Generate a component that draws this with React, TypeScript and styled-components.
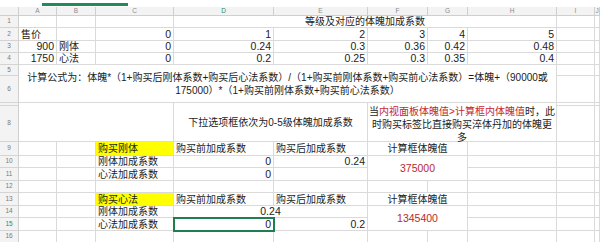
import React from 'react';
import styled, { createGlobalStyle, css } from 'styled-components';

const GlobalStyle = createGlobalStyle`
  html, body { margin: 0; padding: 0; background: #fff; overflow: hidden; }
  body { font-family: "Liberation Sans", "Noto Sans CJK SC", sans-serif; color: #1c1c1c; }
`;

const COLS = ['A', 'B', 'C', 'D', 'E', 'F', 'G', 'H', 'I', 'J'];
const COL_W = [19, 38, 39, 78, 100, 94, 60, 40, 89, 38, 5];
const ROW_H = [9, 12, 13, 12, 12, 11, 27, 3, 36, 14, 12, 13, 12, 13, 12, 13, 12];
const ROWS = 16;

type Align = 'left' | 'right' | 'center';
type CellDef = {
  col: string;
  row: number;
  cs?: number;
  rs?: number;
  text?: React.ReactNode;
  align?: Align;
  bg?: string;
  color?: string;
  selected?: boolean;
  num?: boolean;
  padTop?: number;
};

const Sheet = styled.div`
  width: 600px;
  height: 242px;
  overflow: hidden;
  background: #fff;
`;

const TabStrip = styled.div`
  height: 7px;
  display: flex;
  align-items: flex-start;
  padding-left: 42px;
  box-sizing: border-box;
`;

const ActiveTab = styled.div`
  margin-top: 3px;
  width: 86px;
  height: 3px;
  background: #1f8c5a;
`;

const Grid = styled.div`
  display: grid;
  grid-template-columns: ${COL_W.map((w) => `${w}px`).join(' ')};
  grid-template-rows: ${ROW_H.map((h) => `${h}px`).join(' ')};
`;

const Corner = styled.div`
  grid-column: 1;
  grid-row: 1;
  background: #f3f3f3;
  border-right: 1px solid #cfcfcf;
  border-bottom: 1px solid #cfcfcf;
  box-sizing: border-box;
`;

const ColHeader = styled.div<{ $c: number; $active?: boolean }>`
  grid-column: ${(p) => p.$c};
  grid-row: 1;
  background: #f3f3f3;
  border-right: 1px solid #cfcfcf;
  border-bottom: 1px solid #cfcfcf;
  box-sizing: border-box;
  display: flex;
  align-items: center;
  justify-content: center;
  font-size: 6.5px;
  line-height: 1;
  color: ${(p) => (p.$active ? '#2a8a5c' : '#8c8c8c')};
  overflow: hidden;
`;

const RowHeader = styled.div<{ $r: number; $active?: boolean }>`
  grid-column: 1;
  grid-row: ${(p) => p.$r};
  background: #f3f3f3;
  border-right: 1px solid #cfcfcf;
  border-bottom: 1px solid #d4d4d4;
  box-sizing: border-box;
  display: flex;
  align-items: center;
  justify-content: center;
  font-size: 6.5px;
  line-height: 1;
  color: ${(p) => (p.$active ? '#2a8a5c' : '#7a7a7a')};
  overflow: hidden;
`;

const Cell = styled.div<{
  $c: number;
  $r: number;
  $cs: number;
  $rs: number;
  $align: Align;
  $bg?: string;
  $color?: string;
  $selected?: boolean;
  $num?: boolean;
  $padTop?: number;
}>`
  grid-column: ${(p) => `${p.$c} / span ${p.$cs}`};
  grid-row: ${(p) => `${p.$r} / span ${p.$rs}`};
  box-sizing: border-box;
  border-right: 1px solid #dadada;
  border-bottom: 1px solid #dadada;
  background: ${(p) => p.$bg || '#fff'};
  color: ${(p) => p.$color || '#1c1c1c'};
  display: flex;
  align-items: center;
  justify-content: ${(p) =>
    p.$align === 'right' ? 'flex-end' : p.$align === 'center' ? 'center' : 'flex-start'};
  text-align: ${(p) => p.$align};
  padding: ${(p) => `${p.$padTop || 0}px 2px 0`};
  font-size: ${(p) => (p.$num ? '10.5px' : '10px')};
  line-height: 13px;
  white-space: nowrap;
  min-width: 0;
  ${(p) =>
    p.$selected &&
    css`
      position: relative;
      z-index: 1;
      outline: 2px solid #1f7d4f;
      outline-offset: -1px;
    `}
`;

const Red = styled.span`
  color: #c4262e;
`;

const cells: CellDef[] = [
  { col: 'D', row: 1, cs: 5, text: '等级及对应的体魄加成系数', align: 'center' },

  { col: 'A', row: 2, text: '售价' },
  { col: 'C', row: 2, text: '0', num: true },
  { col: 'D', row: 2, text: '1', num: true },
  { col: 'E', row: 2, text: '2', num: true },
  { col: 'F', row: 2, text: '3', num: true },
  { col: 'G', row: 2, text: '4', num: true },
  { col: 'H', row: 2, text: '5', num: true },

  { col: 'A', row: 3, text: '900', num: true },
  { col: 'B', row: 3, text: '刚体' },
  { col: 'C', row: 3, text: '0', num: true },
  { col: 'D', row: 3, text: '0.24', num: true },
  { col: 'E', row: 3, text: '0.3', num: true },
  { col: 'F', row: 3, text: '0.36', num: true },
  { col: 'G', row: 3, text: '0.42', num: true },
  { col: 'H', row: 3, text: '0.48', num: true },

  { col: 'A', row: 4, text: '1750', num: true },
  { col: 'B', row: 4, text: '心法' },
  { col: 'C', row: 4, text: '0', num: true },
  { col: 'D', row: 4, text: '0.2', num: true },
  { col: 'E', row: 4, text: '0.25', num: true },
  { col: 'F', row: 4, text: '0.3', num: true },
  { col: 'G', row: 4, text: '0.35', num: true },
  { col: 'H', row: 4, text: '0.4', num: true },

  {
    col: 'A',
    row: 5,
    cs: 8,
    rs: 2,
    align: 'center',
    text: (
      <span>
        计算公式为：体魄*（1+购买后刚体系数+购买后心法系数）/（1+购买前刚体系数+购买前心法系数）=体魄+（90000或
        <br />
        175000）*（1+购买前刚体系数+购买前心法系数）
      </span>
    ),
  },

  { col: 'A', row: 7, cs: 3, rs: 2 },
  { col: 'D', row: 7, cs: 2, rs: 2, align: 'center', text: '下拉选项框依次为0-5级体魄加成系数' },
  {
    col: 'F',
    row: 7,
    cs: 3,
    rs: 2,
    align: 'center',
    padTop: 4,
    text: (
      <span>
        当<Red>内视面板体魄值&gt;计算框内体魄值</Red>时，此
        <br />
        时购买标签比直接购买淬体丹加的体魄更
        <br />多
      </span>
    ),
  },

  { col: 'C', row: 9, text: '购买刚体', bg: '#ffff00' },
  { col: 'D', row: 9, text: '购买前加成系数' },
  { col: 'E', row: 9, text: '购买后加成系数' },
  { col: 'F', row: 9, cs: 2, text: '计算框体魄值', align: 'center' },

  { col: 'C', row: 10, text: '刚体加成系数' },
  { col: 'D', row: 10, text: '0', num: true },
  { col: 'E', row: 10, text: '0.24', num: true },
  { col: 'F', row: 10, cs: 2, rs: 2, text: '375000', align: 'center', color: '#b8282f', num: true },

  { col: 'C', row: 11, text: '心法加成系数' },
  { col: 'D', row: 11, text: '0', num: true },

  { col: 'C', row: 13, text: '购买心法', bg: '#ffff00' },
  { col: 'D', row: 13, text: '购买前加成系数' },
  { col: 'E', row: 13, text: '购买后加成系数' },
  { col: 'F', row: 13, cs: 2, text: '计算框体魄值', align: 'center' },

  { col: 'C', row: 14, text: '刚体加成系数' },
  { col: 'D', row: 14, cs: 2, text: '0.24', align: 'center', num: true },
  { col: 'F', row: 14, cs: 2, rs: 2, text: '1345400', align: 'center', color: '#b8282f', num: true },

  { col: 'C', row: 15, text: '心法加成系数' },
  { col: 'D', row: 15, text: '0', num: true, selected: true },
  { col: 'E', row: 15, text: '0.2', num: true },
];

function buildCells(): CellDef[] {
  const covered = new Set<string>();
  const byKey = new Map<string, CellDef>();
  cells.forEach((d) => {
    const ci = COLS.indexOf(d.col);
    byKey.set(`${ci}-${d.row}`, d);
    for (let r = d.row; r < d.row + (d.rs || 1); r++) {
      for (let c = ci; c < ci + (d.cs || 1); c++) {
        if (!(r === d.row && c === ci)) covered.add(`${c}-${r}`);
      }
    }
  });
  const out: CellDef[] = [];
  for (let r = 1; r <= ROWS; r++) {
    for (let c = 0; c < COLS.length; c++) {
      const key = `${c}-${r}`;
      if (covered.has(key)) continue;
      out.push(byKey.get(key) || { col: COLS[c], row: r });
    }
  }
  return out;
}

export default function App() {
  const all = buildCells();
  return (
    <Sheet>
      <GlobalStyle />
      <TabStrip>
        <ActiveTab />
      </TabStrip>
      <Grid>
        <Corner />
        {COLS.map((c, i) => (
          <ColHeader key={c} $c={i + 2} $active={c === 'D'}>
            {c}
          </ColHeader>
        ))}
        {Array.from({ length: ROWS }, (_, i) => (
          <RowHeader key={i} $r={i + 2} $active={i + 1 === 15}>
            {i + 1 === 7 ? '' : i + 1}
          </RowHeader>
        ))}
        {all.map((d) => {
          const ci = COLS.indexOf(d.col);
          const align: Align = d.align || (d.num ? 'right' : 'left');
          return (
            <Cell
              key={`${d.col}${d.row}`}
              $c={ci + 2}
              $r={d.row + 1}
              $cs={d.cs || 1}
              $rs={d.rs || 1}
              $align={align}
              $bg={d.bg}
              $color={d.color}
              $selected={d.selected}
              $num={d.num}
              $padTop={d.padTop}
            >
              {d.text}
            </Cell>
          );
        })}
      </Grid>
    </Sheet>
  );
}
